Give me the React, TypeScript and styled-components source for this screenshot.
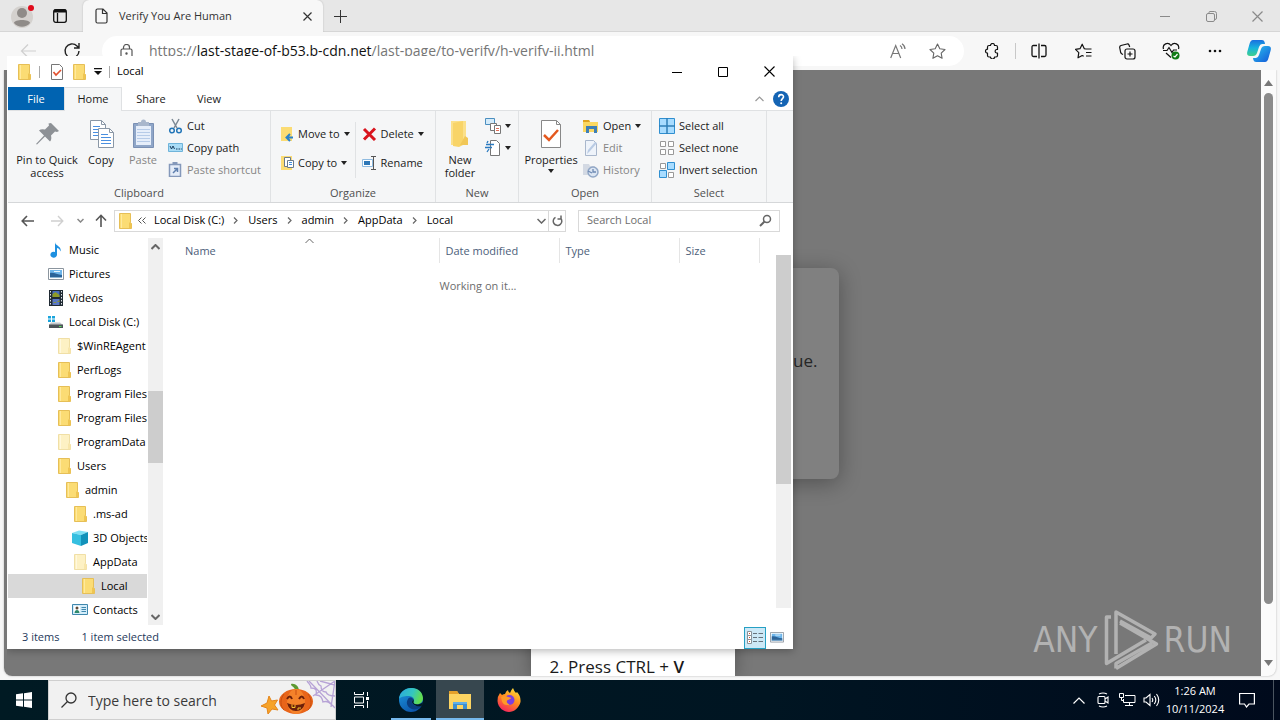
import React from "react";
import styled, { createGlobalStyle, css } from "styled-components";

const GlobalStyle = createGlobalStyle`
  * { box-sizing: border-box; }
  body { margin: 0; font-family: "Open Sans", "Noto Sans", sans-serif; font-size: 11px; color: #1a1a1a; }
  button, input { font: inherit; color: inherit; }
  button { background: none; border: 0; padding: 0; cursor: default; }
  a { color: inherit; text-decoration: none; }
  svg { display: block; flex: none; }
`;

/* ---------- desktop ---------- */
const Desktop = styled.div`
  position: relative;
  display: flex;
  flex-direction: column;
  min-height: 100vh;
  overflow: hidden;
`;
const Browser = styled.section`
  flex: 1;
  display: flex;
  flex-direction: column;
  background: #f7f7f7;
`;
const Slot = styled.button<{ $w: number; $h?: number }>`
  width: ${(p) => p.$w}px;
  height: ${(p) => (p.$h ? `${p.$h}px` : "100%")};
  flex: none;
  display: flex;
  align-items: center;
  justify-content: center;
`;
const Spacer = styled.div`
  flex: 1;
`;

/* ---------- browser chrome ---------- */
const TabStrip = styled.div`
  display: flex;
  height: 32px;
  background: #e7e7e7;
  box-shadow: inset 0 -1px #d6d6d6;
`;
const Tab = styled.div`
  display: flex;
  align-items: center;
  width: 240px;
  height: 32px;
  padding: 0 2px 0 12px;
  gap: 11px;
  background: #f7f7f7;
  border-radius: 6px 6px 0 0;
  box-shadow: 0 0 2px #b8b8b8;
  color: #333;
`;
const TabTitle = styled.span`
  flex: 1;
  padding-bottom: 2px;
`;
const Toolbar = styled.div`
  display: flex;
  align-items: center;
  height: 38px;
  padding-left: 6px;
  background: #f7f7f7;
  position: relative;
`;
const AddressPill = styled.div`
  flex: 1;
  display: flex;
  align-items: center;
  height: 30px;
  margin: 0 6px 0 8px;
  padding: 0 8px 0 18px;
  border-radius: 15px;
  background: #fff;
`;
const Url = styled.div`
  flex: 1;
  margin-left: 16px;
  font-size: 14px;
  line-height: 20px;
  white-space: nowrap;
  color: #767676;
  b { font-weight: 400; color: #111; }
`;
const Divider = styled.span<{ $h: number; $m?: number; $c?: string }>`
  width: 1px;
  height: ${(p) => p.$h}px;
  margin: 0 ${(p) => p.$m ?? 1}px;
  background: ${(p) => p.$c ?? "#c8c8c8"};
`;
const PageRow = styled.div`
  flex: 1;
  display: flex;
  margin: 0 4px 4px;
  border-radius: 0 0 8px 8px;
  overflow: hidden;
  background: #fbfbfb;
  box-shadow: 0 0 2px #aaa;
`;
const Page = styled.main`
  position: relative;
  flex: 1;
  display: grid;
  place-items: center;
  overflow: hidden;
  background: #787878;
`;
const Card = styled.div`
  display: flex;
  align-items: center;
  justify-content: flex-end;
  width: 412px;
  height: 211px;
  padding: 0 21px 26px;
  border-radius: 8px;
  background: #808080;
  box-shadow: 0 4px 22px rgba(0, 0, 0, 0.32);
  font-size: 17px;
  color: #262626;
`;
const StepsPopup = styled.div`
  position: absolute;
  left: 50%;
  bottom: 0;
  width: 204px;
  height: 140px;
  transform: translateX(-50%);
  display: flex;
  align-items: flex-end;
  padding: 0 19px;
  background: #fff;
  box-shadow: 0 0 16px rgba(0, 0, 0, 0.3);
  font-size: 17px;
  line-height: 18px;
  white-space: nowrap;
  b { font-weight: 600; }
`;
const PageScroll = styled.div`
  display: flex;
  flex-direction: column;
  align-items: center;
  width: 15px;
  padding: 10px 0;
  gap: 4px;
`;
const PageThumb = styled.div`
  width: 9px;
  flex: 1;
  margin: 3px 0 52px;
  border-radius: 5px;
  background: #8b8b8b;
`;
const Watermark = styled.div`
  position: absolute;
  right: 29px;
  bottom: 5px;
  display: flex;
  align-items: center;
  gap: 5px;
  font-family: "Liberation Sans Narrow", "DejaVu Sans Condensed", sans-serif;
  font-size: 35px;
  color: #b2b2b2;
`;

/* ---------- explorer window ---------- */
const Explorer = styled.section`
  position: absolute;
  left: 7px;
  top: 56px;
  width: 786px;
  height: 593px;
  padding-left: 1px;
  display: flex;
  flex-direction: column;
  background: #fff;
  box-shadow: 0 2px 8px rgba(0, 0, 0, 0.28);
  clip-path: inset(0 -12px -12px 0);
`;
const TitleBar = styled.header`
  display: flex;
  align-items: center;
  height: 31px;
  padding: 0 1px 0 8px;
`;
const WinTitle = styled.span`
  flex: 1;
  margin-left: 3px;
  padding-bottom: 2px;
  color: #000;
`;
const RibbonTabs = styled.nav`
  display: flex;
  height: 24px;
  align-items: stretch;
  border-bottom: 1px solid #dfe1e3;
`;
const RibbonTab = styled.button<{ $kind?: "file" | "active" }>`
  width: 58px;
  ${(p) => p.$kind === "file" && css`
    width: 56px;
    background: #0063b1;
    color: #fff;
  `}
  ${(p) => p.$kind === "active" && css`
    background: #f5f6f7;
    border: 1px solid #dfe1e3;
    border-bottom: 0;
    margin-bottom: -1px;
    padding-bottom: 2px;
  `}
`;
const Ribbon = styled.div`
  display: flex;
  height: 92px;
  background: #f5f6f7;
  border-bottom: 1px solid #d5d7d9;
`;
const Group = styled.div<{ $w: number }>`
  width: ${(p) => p.$w}px;
  display: flex;
  flex-direction: column;
  border-right: 1px solid #e0e2e4;
`;
const GroupBody = styled.div`
  flex: 1;
  display: flex;
  align-items: flex-start;
  padding: 4px 0 0 3px;
`;
const GroupName = styled.div`
  height: 18px;
  line-height: 18px;
  text-align: center;
  color: #505050;
`;
const BigButton = styled.button<{ $w: number; $dim?: boolean }>`
  display: flex;
  flex-direction: column;
  align-items: center;
  flex: none;
  width: ${(p) => p.$w}px;
  padding-top: 3px;
  gap: 3px;
  line-height: 13px;
  color: ${(p) => (p.$dim ? "#858585" : "#1a1a1a")};
`;
const Stack = styled.div<{ $gap?: number; $top?: number; $left?: number }>`
  display: flex;
  flex-direction: column;
  align-items: flex-start;
  gap: ${(p) => p.$gap ?? 0}px;
  margin: ${(p) => p.$top ?? 0}px 0 0 ${(p) => p.$left ?? 0}px;
`;
const SmallButton = styled.button<{ $dim?: boolean }>`
  display: flex;
  align-items: center;
  gap: 4px;
  height: 22px;
  padding-bottom: 1px;
  white-space: nowrap;
  color: ${(p) => (p.$dim ? "#858585" : "#1a1a1a")};
`;
const AddressRow = styled.div`
  display: flex;
  align-items: center;
  height: 35px;
  padding: 0 13px 0 4px;
`;
const AddressBox = styled.div`
  flex: 1;
  display: flex;
  align-items: center;
  height: 22px;
  margin-right: 12px;
  padding-left: 2px;
  border: 1px solid #d9d9d9;
`;
const Crumb = styled.a`
  margin-left: 8px;
  padding-bottom: 2px;
  color: #000;
`;
const CrumbArrow = styled.span<{ $first?: boolean }>`
  margin-left: ${(p) => (p.$first ? 5 : 9)}px;
`;
const SearchBox = styled.label`
  display: flex;
  align-items: center;
  width: 202px;
  height: 22px;
  padding: 0 7px 0 8px;
  border: 1px solid #d9d9d9;
  input {
    flex: 1;
    min-width: 0;
    border: 0;
    padding: 0 0 2px;
    outline: 0;
    background: none;
  }
  input::placeholder { color: #6d6d6d; opacity: 1; }
`;
const Body = styled.div`
  flex: 1;
  display: flex;
  min-height: 0;
`;
const Tree = styled.ul`
  width: 139px;
  margin: 0;
  padding: 0;
  list-style: none;
  overflow: hidden;
`;
const TreeItem = styled.button<{ $level: number; $selected?: boolean }>`
  display: flex;
  align-items: center;
  gap: 5px;
  width: 100%;
  height: 24px;
  padding: 0 0 1px ${(p) => 40 + p.$level * 8}px;
  overflow: hidden;
  white-space: nowrap;
  color: #000;
  background: ${(p) => (p.$selected ? "#d9d9d9" : "none")};
`;
const TreeScroll = styled.div`
  display: flex;
  flex-direction: column;
  align-items: center;
  justify-content: space-between;
  width: 15px;
  margin: 0 0 1px 1px;
  padding: 6px 0 5px;
  background: linear-gradient(#f0f0f0 153px, #cdcdcd 153px 225px, #f0f0f0 225px);
`;
const Files = styled.div`
  flex: 1;
  position: relative;
`;
const FileTable = styled.table`
  width: 596px;
  table-layout: fixed;
  border-collapse: collapse;
  th {
    height: 25px;
    padding: 0 0 0 6px;
    font-weight: 400;
    text-align: left;
    color: #4c607a;
    border-right: 1px solid #e5e5e5;
  }
  th:first-child { padding-left: 22px; }
  td { padding: 15px 0 0 34px; text-align: center; color: #6d6d6d; }
`;
const SortMark = styled.span`
  position: absolute;
  left: 142px;
  top: 0;
`;
const FileScroll = styled.div`
  width: 15px;
  margin: 17px 2px 18px 0;
  background: #f0f0f0;
`;
const FileThumb = styled.div`
  height: 229px;
  background: #cdcdcd;
`;
const StatusBar = styled.footer`
  display: flex;
  align-items: center;
  height: 23px;
  padding: 0 5px 0 14px;
  gap: 22px;
  color: #1e395b;
  span { padding-bottom: 2px; }
`;
const ViewButtons = styled.div`
  display: flex;
  margin-left: auto;
`;
const ViewButton = styled.button<{ $on?: boolean }>`
  display: flex;
  align-items: center;
  justify-content: center;
  width: 22px;
  height: 22px;
  border: 1px solid ${(p) => (p.$on ? "#26a0c4" : "transparent")};
  background: ${(p) => (p.$on ? "#cce8f6" : "none")};
`;

/* ---------- taskbar ---------- */
const Taskbar = styled.footer`
  display: flex;
  align-items: stretch;
  height: 40px;
  background: linear-gradient(90deg, #001a23, #001522 60%, #000a1c);
  color: #fff;
`;
const TaskSearch = styled.label`
  position: relative;
  display: flex;
  align-items: center;
  width: 288px;
  padding-left: 12px;
  gap: 11px;
  background: #f1f1f1;
  border: 1px solid #cfcfcf;
  color: #3a3a3a;
  input {
    flex: 1;
    min-width: 0;
    border: 0;
    padding: 0;
    outline: 0;
    background: none;
    font-size: 14px;
  }
  input::placeholder { color: #3a3a3a; opacity: 1; }
`;
const TaskApp = styled.button<{ $running?: boolean; $active?: boolean }>`
  display: flex;
  align-items: center;
  justify-content: center;
  width: 48px;
  margin-left: 1px;
  background-color: ${(p) => (p.$active ? "#37474f" : "transparent")};
  background-image: ${(p) => (p.$running ? "linear-gradient(#76b9ed, #76b9ed)" : "none")};
  background-repeat: no-repeat;
  background-position: center bottom;
  background-size: ${(p) => (p.$active ? "100%" : "40px")} 2px;
`;
const Clock = styled.button`
  width: 64px;
  line-height: 18px;
  text-align: center;
`;

/* ---------- icons ---------- */
type Px = { w?: number; h?: number; vb?: string; children: React.ReactNode; s?: string; f?: string; sw?: number };
const Ico = ({ w = 16, h = w, vb, children, s = "none", f = "none", sw = 1 }: Px) => (
  <svg width={w} height={h} viewBox={vb ?? `0 0 ${w} ${h}`} fill={f} stroke={s} strokeWidth={sw} aria-hidden="true">
    {children}
  </svg>
);
const Folder = ({ pale }: { pale?: boolean }) => (
  <Ico>
    <path d="M2.500.5h11v9l1 1v5h-12z" fill={pale ? "#fdf1c4" : "#fbdc74"} stroke={pale ? "#f0dfa6" : "#e6bf57"} />
    <path d="M12 15V10l1-1 1.500 2v4z" fill={pale ? "#f8e6ab" : "#efc552"} />
    <path d="M4.500 1v14" stroke={pale ? "#fff8de" : "#ffe99d"} />
  </Ico>
);
const Caret = () => <Ico w={7} h={4} f="#222"><path d="M0 0h6L3 4z" /></Ico>;
const Chevron = ({ d, c = "#666", w = 9, h = 6, sw = 1.5 }: { d: string; c?: string; w?: number; h?: number; sw?: number }) => (
  <Ico w={w} h={h} s={c} sw={sw}><path d={d} /></Ico>
);
const UP = "M.5 5l4-4 4 4";
const DOWN = "M.5 1l4 4 4-4";
const Tick = () => (
  <Ico w={14} h={16}>
    <path d="M1.500.5h8l3 3v12h-11z" fill="#fff" stroke="#777" />
    <path d="M3.500 8l2.500 3 5-5" stroke="#e2512f" strokeWidth="1.700" />
  </Ico>
);
const Page2 = ({ x, y }: { x: number; y: number }) => (
  <g transform={`translate(${x} ${y})`}>
    <path d="M.5.5h11l4 4v15H.5z" fill="#fff" stroke="#8a97a6" />
    <path d="M11.500.5v4h4" stroke="#8a97a6" />
    <path d="M3 6.500h7M3 9.500h10M3 12.500h10M3 15.500h10" stroke="#4a8fe0" />
  </g>
);
const PictureIcon = ({ w = 16 }: { w?: number }) => (
  <Ico w={w} h={(w * 3) / 4} vb="0 0 16 12">
    <path d="M.5.5h15v11H.5z" fill="#fff" stroke="#8b959e" />
    <path d="M2 2h12v8H2z" fill="#6db5ea" />
    <path d="M2 5c4-1 7 2 12 2v3H2z" fill="#2b6398" />
    <path d="M6 3.500h6" stroke="#e8f4fc" />
    <path d="M2 9.500h12" stroke="#8fb7d4" />
  </Ico>
);

const tree: { name: string; level: number; icon: React.ReactNode; selected?: boolean }[] = [
  { name: "Music", level: 0, icon: <Ico><path d="M7 0c0 4 7 4 5.500 9.500C12 7 10 6 9 6v6.500A3.300 3 0 1 1 7 10z" fill="#1e90e0" /></Ico> },
  { name: "Pictures", level: 0, icon: <PictureIcon /> },
  { name: "Videos", level: 0, icon: (
    <Ico>
      <path d="M1 0h14v16H1z" fill="#202a33" />
      <path d="M4.500 1h7v6h-7z" fill="#466bc0" /><path d="M4.500 9h7v6h-7z" fill="#5a78c8" />
      <path d="M4.500 4l3-2 4 3v2h-7zM4.500 12l3 1 4-3v2z" fill="#8e9b28" />
      <path d="M2.500 1v14M13.500 1v14" stroke="#dfe5ea" strokeDasharray="1.500 1.500" />
    </Ico>
  ) },
  { name: "Local Disk (C:)", level: 0, icon: (
    <Ico>
      <path d="M0 2h3v2.500H0zM4 2h3v2.500H4zM0 5.500h3V8H0zM4 5.500h3V8H4z" fill="#19a4dc" />
      <path d="M3 8.500h9l3 2.500H1z" fill="#c3c8cc" /><path d="M1 10.500h14V14H1z" fill="#4d5459" />
      <path d="M11 12.500h2.500" stroke="#5ae05a" />
    </Ico>
  ) },
  { name: "$WinREAgent", level: 1, icon: <Folder pale /> },
  { name: "PerfLogs", level: 1, icon: <Folder /> },
  { name: "Program Files", level: 1, icon: <Folder /> },
  { name: "Program Files (x86)", level: 1, icon: <Folder /> },
  { name: "ProgramData", level: 1, icon: <Folder pale /> },
  { name: "Users", level: 1, icon: <Folder /> },
  { name: "admin", level: 2, icon: <Folder /> },
  { name: ".ms-ad", level: 3, icon: <Folder /> },
  { name: "3D Objects", level: 3, icon: (
    <Ico><path d="M0 3l7-2.500L16 2 9 5z" fill="#7fe0f4" /><path d="M0 3l9 2v11l-9-3z" fill="#35bfe0" /><path d="M9 5l7-3v11l-7 3z" fill="#1292ba" /></Ico>
  ) },
  { name: "AppData", level: 3, icon: <Folder pale /> },
  { name: "Local", level: 4, icon: <Folder />, selected: true },
  { name: "Contacts", level: 3, icon: (
    <Ico w={16} h={11}>
      <path d="M.5.5h15v10H.5z" fill="#d4edfa" stroke="#3f87ad" />
      <path d="M2 2h6v7H2z" fill="#fff" /><circle cx="5" cy="4" r="1.500" fill="#5d4a3a" /><path d="M2.500 9c0-4 5-4 5 0z" fill="#2f8a6c" />
      <path d="M9.500 3.500H14M9.500 5.500H14M9.500 7.500H14" stroke="#3f87ad" />
    </Ico>
  ) },
];
const crumbs = ["Local Disk (C:)", "Users", "admin", "AppData", "Local"];

function EdgeChrome() {
  return (
    <>
      <TabStrip>
        <Slot $w={44} aria-label="Profile">
          <Ico w={32} h={32}>
            <circle cx="16" cy="17" r="11" fill="#d4d1ce" />
            <circle cx="16" cy="13" r="5" fill="#8f8b88" />
            <path d="M8 23c0-4 16-4 16 0-4 5-12 5-16 0z" fill="#8f8b88" />
            <circle cx="25" cy="8" r="3" fill="#e00b1c" />
          </Ico>
        </Slot>
        <Slot $w={32} aria-label="Tab actions">
          <Ico w={14} s="#111" sw={1.3}>
            <rect x=".7" y=".7" width="12.600" height="12.600" rx="2" />
            <path d="M1 2.500h12M1 1.500h12" strokeWidth="2" /><path d="M4.500 4v9" />
          </Ico>
        </Slot>
        <Divider $h={32} $m={3} $c="transparent" />
        <Tab>
          <Ico w={13} h={16} s="#333" sw={1.2}><path d="M1 2.500Q1 1 2.500 1H8l4 4v8.500q0 1.500-1.500 1.500h-8Q1 15 1 13.500zM7.500 1v4.500H12" /></Ico>
          <TabTitle>Verify You Are Human</TabTitle>
          <Slot $w={28} aria-label="Close tab"><Ico w={9} s="#333" sw={1.2}><path d="M.5.5l8 8M8.500.5l-8 8" /></Ico></Slot>
        </Tab>
        <Slot $w={35} aria-label="New tab"><Ico w={15} s="#333"><path d="M7.500 1v13M1 7.500h13" /></Ico></Slot>
        <Spacer />
        <Slot $w={46} aria-label="Minimize"><Ico w={10} s="#8a8a8a"><path d="M0 5.500h10" /></Ico></Slot>
        <Slot $w={46} aria-label="Restore"><Ico w={11} s="#8a8a8a"><rect x=".5" y="2.500" width="8" height="8" rx="1.500" /><path d="M3 2V1.500Q3 .5 4 .5h4.500q2 0 2 2V7q0 1.500-1.500 1.500" /></Ico></Slot>
        <Slot $w={46} aria-label="Close"><Ico w={11} s="#8a8a8a" sw={1.2}><path d="M.5.5l10 10M10.500.5l-10 10" /></Ico></Slot>
      </TabStrip>
      <Toolbar>
        <Slot $w={44} aria-label="Back"><Ico w={16} s="#cfcfcf" sw={1.2}><path d="M16 8H1.500M8 1.500L1.500 8 8 14.500" /></Ico></Slot>
        <Slot $w={44} aria-label="Refresh"><Ico w={18} s="#222" sw={1.4}><path d="M16 9a7 7 0 1 1-2-5l2 2M16 1v5h-5" /></Ico></Slot>
        <AddressPill>
          <Ico w={13} h={15} s="#555" sw={1.2}><rect x="1" y="5" width="11" height="9" rx="1.500" /><path d="M3.500 5V3.500a3 3 0 0 1 6 0V5" /><circle cx="6.500" cy="9.500" r=".6" fill="#555" /></Ico>
          <Url>https://<b>last-stage-of-b53.b-cdn.net</b>/last-page/to-verify/h-verify-ii.html</Url>
          <Slot $w={40} aria-label="Read aloud">
            <Ico w={16} s="#777" sw={1.2}><path d="M.7 15L5.700 2.500 10.700 15M2.500 10.500h6.500M10 2.500q2 1.200 2 3.500M12 .7q3 2 3 5.300" /></Ico>
          </Slot>
          <Slot $w={38} aria-label="Favorite">
            <Ico w={17} s="#666" sw={1.1}><path d="M8.500 1l2.300 4.800 5.200.7-3.800 3.600.9 5.200-4.600-2.500-4.600 2.500.9-5.200L1 6.500l5.200-.7z" strokeLinejoin="round" /></Ico>
          </Slot>
        </AddressPill>
        <Slot $w={44} aria-label="Extensions">
          <Ico w={16} s="#111" sw={1.2}><path d="M5 2.500h1.500a2 2 0 0 1 4 0H12q1.500 0 1.500 1.500v2.500h-1a1.800 1.800 0 0 0 0 3.500h1v2.500q0 1.500-1.500 1.500h-1.500a2 2 0 0 1-4 0H5q-1.500 0-1.500-1.500V10.200a2 2 0 0 1 0-4V4q0-1.500 1.500-1.500z" strokeLinejoin="round" /></Ico>
        </Slot>
        <Divider $h={16} />
        <Slot $w={44} aria-label="Split screen"><Ico w={16} s="#111" sw={1.3}><path d="M6 2.500H2.500q-1.500 0-1.500 1.500v8q0 1.500 1.500 1.500H6M10 2.500h3.500Q15 2.500 15 4v8q0 1.500-1.500 1.500H10M8 .5v15" /></Ico></Slot>
        <Slot $w={44} aria-label="Favorites"><Ico w={17} s="#111" sw={1.2}><path d="M10.500 6L9.300 5.700 7.200 1.200 5 5.700l-4.500.7 3.300 3.200-.8 5.200 4.200-2.300 1.500.8M10.500 6h6M11 9.500h5.500M11 13h5.500" strokeLinejoin="round" /></Ico></Slot>
        <Slot $w={44} aria-label="Collections"><Ico w={17} s="#111" sw={1.2}><rect x="6" y="6" width="10" height="10" rx="2" /><path d="M11 8.500v5M8.500 11h5M4 11.500l-1-.5q-1-.5-1.300-1.500l-1-5Q.5 3 2 2.500l6-1.500q1.500-.3 2 1l.7 2" /></Ico></Slot>
        <Slot $w={44} aria-label="Browser essentials">
          <Ico w={18} s="#111" sw={1.2}><path d="M1.500 7C0 2 6-.5 9 3.500c3-4 9-1.500 7.500 3.500M1 8.500h4l2-3 3 5 1.500-2.500H15M4 11l5 4.500" /><circle cx="13.500" cy="13.500" r="4" fill="#0f7b14" stroke="none" /><path d="M11.500 14l1.500 1 2.500-3" stroke="#fff" /></Ico>
        </Slot>
        <Slot $w={44} aria-label="Settings and more"><Ico w={14} h={4} f="#111"><circle cx="2" cy="2" r="1.300" /><circle cx="7" cy="2" r="1.300" /><circle cx="12" cy="2" r="1.300" /></Ico></Slot>
        <Slot $w={43} aria-label="Copilot">
          <Ico w={24} h={22}>
            <defs>
              <linearGradient id="cpA" x1="0" y1="0" x2="0" y2="1"><stop offset="0" stopColor="#1a6fe0" /><stop offset=".5" stopColor="#17b3dd" /><stop offset="1" stopColor="#3fd08c" /></linearGradient>
              <linearGradient id="cpB" x1="0" y1="0" x2="1" y2="1"><stop offset="0" stopColor="#2bc4ee" /><stop offset="1" stopColor="#1458d8" /></linearGradient>
            </defs>
            <path d="M6 0h9q2 0 2.600 2L18 4h-3q-2 0-3 3l-2 6q-1 3-4 3H3q-4 0-2.500-5L2.500 4Q3.500 0 6 0z" fill="url(#cpA)" />
            <path d="M18 22H9q-2 0-2.600-2L6 18h3q2 0 3-3l2-6q1-3 4-3h3q4 0 2.500 5l-2 7q-1 4-3.500 4z" fill="url(#cpB)" />
          </Ico>
        </Slot>
      </Toolbar>
    </>
  );
}

function RibbonBar() {
  return (
    <Ribbon>
      <Group $w={263}>
        <GroupBody>
          <BigButton $w={72}>
            <Ico w={32}><path d="M20 5l8 8-2 1-2-.5-4 4q1 4-1 6l-5-5-8 8-1-.5 8-8.500-5-5q2-2 6-1l4-4-.5-2z" fill="#8d9196" /></Ico>
            <span>Pin to Quick<br />access</span>
          </BigButton>
          <BigButton $w={36}><Ico w={32}><Page2 x={5} y={2} /><Page2 x={13} y={10} /></Ico>Copy</BigButton>
          <BigButton $w={48} $dim>
            <Ico w={32}>
              <path d="M6.500 5.500h20v24h-20z" fill="#8fa6c8" stroke="#7a90b4" /><path d="M9 8h15v19H9z" fill="#e6eefa" />
              <path d="M10 11.500h13M10 14.500h13M10 17.500h13M10 20.500h13M10 23.500h13" stroke="#b6cbe8" />
              <path d="M11 4h3a2.500 2.500 0 0 1 5 0h3v4H11z" fill="#a9b7cc" />
            </Ico>
            Paste
          </BigButton>
          <Stack $left={1}>
            <SmallButton>
              <Ico w={15} h={16}><path d="M4 1l5 9M11 1L6 10" stroke="#7b8894" strokeWidth="1.500" /><circle cx="4" cy="12.500" r="2.300" stroke="#2376b8" strokeWidth="1.500" /><circle cx="11" cy="12.500" r="2.300" stroke="#2376b8" strokeWidth="1.500" /></Ico>Cut
            </SmallButton>
            <SmallButton>
              <Ico w={15} h={9}><path d="M.5.5h14v8H.5z" fill="#a9dcf6" stroke="#6fb4da" /><path d="M2 3l1.500 3L5 3l1.500 3M8 6h1.500M10.500 6H12M12.800 6h1" stroke="#1b3f60" /></Ico>Copy path
            </SmallButton>
            <SmallButton $dim>
              <Ico w={15} h={15}><path d="M1.500 2.500h11v12h-11z" fill="#e4ecf8" stroke="#8498ba" strokeWidth="1.500" /><path d="M4.500 0h5v3h-5z" fill="#8498ba" /><path d="M5 11l4-4M6 6.500h3.500V10" stroke="#5f7fae" strokeWidth="1.500" /></Ico>Paste shortcut
            </SmallButton>
          </Stack>
        </GroupBody>
        <GroupName>Clipboard</GroupName>
      </Group>
      <Group $w={165}>
        <GroupBody>
          <Stack $gap={7} $top={8} $left={6}>
            <SmallButton><Ico w={14} h={16}><path d="M1 1h11v14H1z" fill="#fbdc74" /><path d="M13 11.500H7M10 8l-3.500 3.500L10 15" stroke="#2b82c9" strokeWidth="2" /></Ico>Move to<Caret /></SmallButton>
            <SmallButton><Ico w={14} h={16}><path d="M1 1h11v14H1z" fill="#fbdc74" /><path d="M4.500 2.500h6v9h-6z" fill="#fff" stroke="#6a7a8a" /><path d="M7.500 5.500h6v7h-6z" fill="#fff" stroke="#6a7a8a" /><path d="M9 7.500h3M9 9.500h3" stroke="#3f8de0" /></Ico>Copy to<Caret /></SmallButton>
          </Stack>
          <Stack $top={7} $left={4}><Divider $h={56} $m={0} $c="#e0e2e4" /></Stack>
          <Stack $gap={7} $top={8} $left={6}>
            <SmallButton><Ico w={15}><path d="M2 3l11 11M13 2.500L2 13.500" stroke="#d9141e" strokeWidth="3" /></Ico>Delete<Caret /></SmallButton>
            <SmallButton><Ico w={15}><path d="M.5 4.500h10v7H.5z" fill="#fff" stroke="#8fbbe0" /><path d="M2 6h6v4H2z" fill="#2f78b7" /><path d="M9 1.500h5M9 14.500h5M11.500 2v12" stroke="#555" /></Ico>Rename</SmallButton>
          </Stack>
        </GroupBody>
        <GroupName>Organize</GroupName>
      </Group>
      <Group $w={83}>
        <GroupBody>
          <BigButton $w={42}>
            <Ico w={32}><path d="M7 3h15v24H7z" fill="#fbe08a" /><path d="M9 5l10-2v24l-4 2-6-1z" fill="#f8d468" /><path d="M21 18l3 2v7h-8z" fill="#f1c757" /></Ico>
            <span>New<br />folder</span>
          </BigButton>
          <Stack $left={4}>
            <SmallButton aria-label="New item"><Ico><path d="M.5.5h9v6h-9z" fill="#d4ebfa" stroke="#4b8fc0" /><path d="M5.500 5.500h6v7h-6z" fill="#fff" stroke="#777" /><path d="M9.500 7.500h6v8h-6z" fill="#fff" stroke="#777" /><path d="M11 10.500h3M11 12.500h3" stroke="#e0705a" /></Ico><Caret /></SmallButton>
            <SmallButton aria-label="Easy access"><Ico><path d="M5.500.5h6l3 3v12h-9z" fill="#fff" stroke="#777" /><path d="M1 4.500h8M0 7.500h7M3 1l-1 2M4 9l-2 3" stroke="#2a7ac0" strokeWidth="1.300" /></Ico><Caret /></SmallButton>
          </Stack>
        </GroupBody>
        <GroupName>New</GroupName>
      </Group>
      <Group $w={133}>
        <GroupBody>
          <BigButton $w={58}>
            <Ico w={32}><path d="M6.500 2.500h15l4 4v23h-19z" fill="#fff" stroke="#888" /><path d="M21.500 2.500v4h4" stroke="#888" /><path d="M9 17l5 5 9-10" stroke="#e4591f" strokeWidth="2.500" /></Ico>
            <span>Properties</span><Caret />
          </BigButton>
          <Stack $left={3}>
            <SmallButton><Ico><path d="M0 2h6l1 2h8v10H0z" fill="#fbd861" /><path d="M0 2h6l1 2H0z" fill="#e0a420" /><path d="M3 15V8h11v7h-3v-4H6v4z" fill="#3f7fb5" /></Ico>Open<Caret /></SmallButton>
            <SmallButton $dim><Ico><path d="M2.500.5h8l3 3v12h-11z" fill="#eef3fa" stroke="#a9b7cc" /><path d="M14 3L7 11l-3 3 1-4 7-8z" fill="#b9cbe4" /></Ico>Edit</SmallButton>
            <SmallButton $dim><Ico><path d="M0 2h6l1 2h5v9H0z" fill="#d3d9e3" /><circle cx="10" cy="10" r="5" fill="#dbe5f2" stroke="#91a7c6" strokeWidth="1.500" /><path d="M10 7v3h3M5 9l4 2" stroke="#6d89b3" strokeWidth="1.300" /></Ico>History</SmallButton>
          </Stack>
        </GroupBody>
        <GroupName>Open</GroupName>
      </Group>
      <Group $w={115}>
        <GroupBody>
          <Stack $left={4}>
            <SmallButton><Ico><path d="M.5.5h15v15H.5z" fill="#a8dcff" stroke="#2f8fd0" /><path d="M8 0v16M0 8h16" stroke="#2f7fb8" strokeWidth="1.500" /></Ico>Select all</SmallButton>
            <SmallButton><Ico s="#999" f="#fff"><path d="M1.500 1.500h5v5h-5zM9.500 1.500h5v5h-5zM1.500 9.500h5v5h-5zM9.500 9.500h5v5h-5z" /></Ico>Select none</SmallButton>
            <SmallButton><Ico s="#999" f="#fff"><path d="M1.500 1.500h5v5h-5zM9.500 10.500h5v5h-5z" /><path d="M8.500.5h7v7h-7zM.5 8.500h7v7h-7z" fill="#a8dcff" stroke="#2f8fd0" /></Ico>Invert selection</SmallButton>
          </Stack>
        </GroupBody>
        <GroupName>Select</GroupName>
      </Group>
    </Ribbon>
  );
}

function ExplorerWindow() {
  return (
    <Explorer aria-label="Local">
      <TitleBar>
        <Folder />
        <Divider $h={12} $m={7} $c="#aaa" />
        <Slot $w={20} aria-label="Properties"><Tick /></Slot>
        <Slot $w={24} aria-label="New folder"><Folder /></Slot>
        <Slot $w={14} aria-label="Customize"><Ico w={8} h={7} f="#111"><path d="M0 0h8v1.200H0zM0 3h8L4 7z" /></Ico></Slot>
        <Divider $h={12} $m={4} $c="#aaa" />
        <WinTitle>Local</WinTitle>
        <Slot $w={46} aria-label="Minimize"><Ico w={10} s="#000"><path d="M0 5.500h10" /></Ico></Slot>
        <Slot $w={46} aria-label="Maximize"><Ico w={10} s="#000"><path d="M.5.5h9v9h-9z" /></Ico></Slot>
        <Slot $w={46} aria-label="Close"><Ico w={11} s="#000" sw={1.1}><path d="M.5.5l10 10M10.500.5l-10 10" /></Ico></Slot>
      </TitleBar>
      <RibbonTabs>
        <RibbonTab $kind="file">File</RibbonTab>
        <RibbonTab $kind="active">Home</RibbonTab>
        <RibbonTab>Share</RibbonTab>
        <RibbonTab>View</RibbonTab>
        <Spacer />
        <Slot $w={20} aria-label="Collapse ribbon"><Chevron d={UP} c="#999" sw={1.2} /></Slot>
        <Slot $w={24} aria-label="Help">
          <Ico w={16}><circle cx="8" cy="8" r="8" fill="#1464b4" /><path d="M5.700 6.200c0-3.500 5-3.200 4.800-.3C10.400 7.600 8.200 7.800 8.200 10" stroke="#fff" strokeWidth="1.600" /><circle cx="8.200" cy="12.300" r="1" fill="#fff" /></Ico>
        </Slot>
      </RibbonTabs>
      <RibbonBar />
      <AddressRow>
        <Slot $w={30} aria-label="Back"><Ico w={13} h={12} s="#555" sw={1.6}><path d="M13 6H1.500M6 1L1.200 6 6 11" /></Ico></Slot>
        <Slot $w={30} aria-label="Forward"><Ico w={13} h={12} s="#d0d0d0" sw={1.4}><path d="M0 6h11.500M7 1l4.800 5L7 11" /></Ico></Slot>
        <Slot $w={16} aria-label="Recent locations"><Chevron d="M.5 1l3 3 3-3" w={7} h={5} c="#888" /></Slot>
        <Slot $w={26} aria-label="Up"><Ico w={12} h={13} s="#555" sw={1.6}><path d="M6 13V1.500M1 6.500L6 1.300l5 5.200" /></Ico></Slot>
        <AddressBox>
          <Folder />
          <CrumbArrow $first><Ico w={8} h={7} s="#555"><path d="M3.500.5l-3 3 3 3M7.500.5l-3 3 3 3" /></Ico></CrumbArrow>
          {crumbs.map((c, i) => (
            <React.Fragment key={c}>
              {i > 0 && <CrumbArrow><Chevron d="M1 .5l3 3-3 3" w={7} h={7} sw={1.2} /></CrumbArrow>}
              <Crumb href="#">{c}</Crumb>
            </React.Fragment>
          ))}
          <Spacer />
          <Slot $w={14} aria-label="Address history"><Chevron d={DOWN} /></Slot>
          <Divider $h={20} $m={0} $c="#d9d9d9" />
          <Slot $w={16} aria-label="Refresh"><Ico w={11} h={12} s="#666" sw={1.5}><path d="M2.500 3a4.300 4.300 0 1 0 5-.700M2 .5V4h3.500" transform="translate(11 0) scale(-1 1)" /></Ico></Slot>
        </AddressBox>
        <SearchBox>
          <input placeholder="Search Local" aria-label="Search Local" />
          <Ico w={13} s="#666" sw={1.5}><circle cx="8" cy="5" r="3.500" /><path d="M5.500 7.500L1 12" strokeWidth="2" /></Ico>
        </SearchBox>
      </AddressRow>
      <Body>
        <Tree>
          {tree.map((t) => (
            <li key={t.name}><TreeItem $level={t.level} $selected={t.selected}>{t.icon}{t.name}</TreeItem></li>
          ))}
        </Tree>
        <TreeScroll><Chevron d={UP} sw={2} /><Chevron d={DOWN} sw={2} /></TreeScroll>
        <Files>
          <FileTable>
            <colgroup><col width="276" /><col width="120" /><col width="120" /><col width="80" /></colgroup>
            <thead><tr><th>Name</th><th>Date modified</th><th>Type</th><th>Size</th></tr></thead>
            <tbody><tr><td colSpan={4}>Working on it...</td></tr></tbody>
          </FileTable>
          <SortMark><Chevron d={UP} sw={1} /></SortMark>
        </Files>
        <FileScroll><FileThumb /></FileScroll>
      </Body>
      <StatusBar>
        <span>3 items</span>
        <span>1 item selected</span>
        <ViewButtons>
          <ViewButton $on aria-label="Details view">
            <Ico w={16} h={13}><path d="M.5.5h4v4h-4zM.5 4.500h4v4h-4zM.5 8.500h4v4h-4z" fill="#fff" stroke="#8a9299" /><path d="M6 2.500h4M11.500 2.500H16M6 6.500h4M11.500 6.500H16M6 10.500h4M11.500 10.500H16" stroke="#66727c" /><path d="M2 2.500h1M2 6.500h1M2 10.500h1" stroke="#d0502a" /></Ico>
          </ViewButton>
          <ViewButton aria-label="Large icons view"><PictureIcon w={14} /></ViewButton>
        </ViewButtons>
      </StatusBar>
    </Explorer>
  );
}

const Halloween = () => (
  <svg width="76" height="38" viewBox="0 0 76 38" fill="none" aria-hidden="true">
    <path d="M50 0l26 27M61 0l15 4M76 0L54 15M76 0l-4 26M48 0c3 4 4 4 4 7 5 0 6 2 5 7 5 0 6 3 7 7 5-2 8 2 12 6M58 0c1 3 2 4 4 5 0 4 2 6 5 6 1 3 4 4 9 4" stroke="#b7a3d6" strokeWidth="1.300" />
    <g transform="translate(2 0)">
      <path d="M8 15l2.500 5 6-1-3 5 3.500 5-6-1-4 5-1-6-6-2 6-3z" fill="#f6a32a" stroke="#e5851a" />
      <path d="M34 10c0-5-4-4-4-7 4-1 8 2 8 7z" fill="#5e9a32" />
      <ellipse cx="35" cy="20.500" rx="17" ry="12.500" fill="#e8651a" />
      <ellipse cx="35" cy="20.500" rx="9" ry="12.500" fill="#f5822a" />
      <path d="M23 13c-4 5-4 12 0 16M47 13c4 5 4 12 0 16M35 9v5" stroke="#c94f10" />
      <path d="M26 18q3-5 5 0M38 18q3-5 5 0" stroke="#6b1f0a" strokeWidth="2" />
      <path d="M26 22q9 4 18 0-2 8-9 8t-9-8z" fill="#6b1f0a" />
      <path d="M31 23.500v3h3V24M37 29v-2h3" stroke="#f5c02a" />
    </g>
  </svg>
);

function TaskbarRow() {
  return (
    <Taskbar>
      <Slot $w={48} aria-label="Start"><Ico w={16} f="#fff"><path d="M0 2.300L7 1.300V7.500H0zM8 1.200L16 0v7.500H8zM0 8.500h7v6.200L0 13.700zM8 8.500h8V16l-8-1.200z" /></Ico></Slot>
      <TaskSearch>
        <Ico w={16} s="#333" sw={1.3}><circle cx="10" cy="6" r="5" /><path d="M6.500 9.500L.5 15.500" /></Ico>
        <input placeholder="Type here to search" aria-label="Type here to search" />
        <Halloween />
      </TaskSearch>
      <Slot $w={50} aria-label="Task view"><Ico w={17} h={16} s="#fff"><path d="M1.500 0v2.500h9V0M1.500 16v-2.500h9V16M1.500 5v6h9V5zM14.500 0v4M14.500 9v7" /><path d="M13 5h3v3h-3z" fill="#fff" stroke="none" /></Ico></Slot>
      <TaskApp $running aria-label="Microsoft Edge">
        <Ico w={24}>
          <defs>
            <linearGradient id="eA" x1="0" y1="0" x2="1" y2=".3"><stop offset="0" stopColor="#2aa8e0" /><stop offset=".6" stopColor="#34c6c0" /><stop offset="1" stopColor="#62dd50" /></linearGradient>
            <linearGradient id="eB" x1="0" y1="0" x2=".6" y2="1"><stop offset="0" stopColor="#1d9ae0" /><stop offset="1" stopColor="#0c55ab" /></linearGradient>
          </defs>
          <circle cx="12" cy="12" r="12" fill="url(#eB)" />
          <path d="M0 11C1-3 23-4 24 10c0 5-4 7-8 6-3-1-1-2-1-4 0-3-3-4-6-4-4 0-8 1-9 3z" fill="url(#eA)" />
          <path d="M9 11c-4 6 3 12 9 10 2-.6 4-2 5-4-3 2-9 1-10-2-.5-2 .5-2.500 1-4-1-2-4-2-5 0z" fill="#0a3d80" />
          <path d="M14 11c2 2-1 4 2 5 3 1 6 0 8-2-.3 2-.5 3-1.500 4-4 1-9-1-9.500-4z" fill="#001a23" />
        </Ico>
      </TaskApp>
      <TaskApp $running $active aria-label="File Explorer">
        <Ico w={22} h={19}><path d="M0 0h8l2 3h12v15H0z" fill="#fcd462" /><path d="M0 0h8l2 3H0z" fill="#e4a12b" /><path d="M4 18v-7h14v7h-4v-4H8v4z" fill="#3d8fd0" /><path d="M4 11h14v2H4z" fill="#60aee6" /></Ico>
      </TaskApp>
      <TaskApp aria-label="Firefox">
        <Ico w={24}>
          <defs><linearGradient id="fA" x1=".8" y1="0" x2=".3" y2="1"><stop offset="0" stopColor="#ffe03a" /><stop offset=".5" stopColor="#ff8a1e" /><stop offset="1" stopColor="#f5225f" /></linearGradient></defs>
          <path d="M3 5l2 2q1.500-1 3-1Q9 3 11 2q0 2 2 3 1-3 3-5 1 3 3 5l1-1q4 4 3.500 10C22 20 17 24 12 24S1 20 .5 13Q.5 8 3 5z" fill="url(#fA)" />
          <circle cx="12.500" cy="12" r="5" fill="#7b3fe0" /><path d="M4 9q4-2 7 0 3 0 3 1.500l-4 2q-1 3 3 4-6 2-8-3z" fill="#ff9a28" />
        </Ico>
      </TaskApp>
      <Spacer />
      <Slot $w={24} aria-label="Show hidden icons"><Ico w={12} h={7} s="#fff" sw={1.2}><path d="M.5 6.500L6 1l5.500 5.500" /></Ico></Slot>
      <Slot $w={24} aria-label="Meet now"><Ico w={14} h={16} s="#fff" sw={1.1}><rect x="2" y="4.500" width="7" height="7" rx="1" /><path d="M9 7l3-2v6L9 9M3 2q4-2 8 0M3 14q4 2 8 0" /></Ico></Slot>
      <Slot $w={24} aria-label="Network"><Ico w={17} h={14} s="#fff"><path d="M6 2.500h10v7H4.500V6M10.500 9.500v3M6 12.500h8M.5.5h4v4h-4zM2.500 4.500v3h2" /></Ico></Slot>
      <Slot $w={24} aria-label="Volume"><Ico w={17} h={14} s="#fff" sw={1.1}><path d="M1 5v4h2l4 3.500v-11L3 5zM9 5q1.500 2 0 4M11.300 3q3 4 0 8M13.500 1q4.500 6 0 12" /></Ico></Slot>
      <Clock>1:26 AM<br />10/11/2024</Clock>
      <Slot $w={40} aria-label="Notifications"><Ico w={16} s="#fff" sw={1.2}><path d="M.6 1.500h14.800v10.500H10L7.500 15 5.500 12H.6z" /></Ico></Slot>
      <Divider $h={40} $m={6} $c="#4a5560" />
    </Taskbar>
  );
}

export default function App() {
  return (
    <Desktop>
      <GlobalStyle />
      <Browser>
        <EdgeChrome />
        <PageRow>
          <Page>
            <Card>to continue.</Card>
            <StepsPopup><span>2. Press CTRL + <b>V</b></span></StepsPopup>
            <Watermark>
              ANY
              <svg width="56" height="62" viewBox="0 0 56 62" fill="none" stroke="#b2b2b2" strokeWidth="3.500" strokeLinejoin="round" aria-hidden="true">
                <path d="M8 8H3.500v46.500L43 31" />
                <path d="M13 45V3l39 22-4 4L17 12" />
                <path d="M13 59.500L53.500 35 17 14M13 59.500v-5L49 34" />
              </svg>
              RUN
            </Watermark>
          </Page>
          <PageScroll>
            <Ico w={9} h={6} f="#777"><path d="M4.500 0L9 6H0z" /></Ico>
            <PageThumb />
            <Ico w={9} h={6} f="#777"><path d="M4.500 6L9 0H0z" /></Ico>
          </PageScroll>
        </PageRow>
      </Browser>
      <ExplorerWindow />
      <TaskbarRow />
    </Desktop>
  );
}
